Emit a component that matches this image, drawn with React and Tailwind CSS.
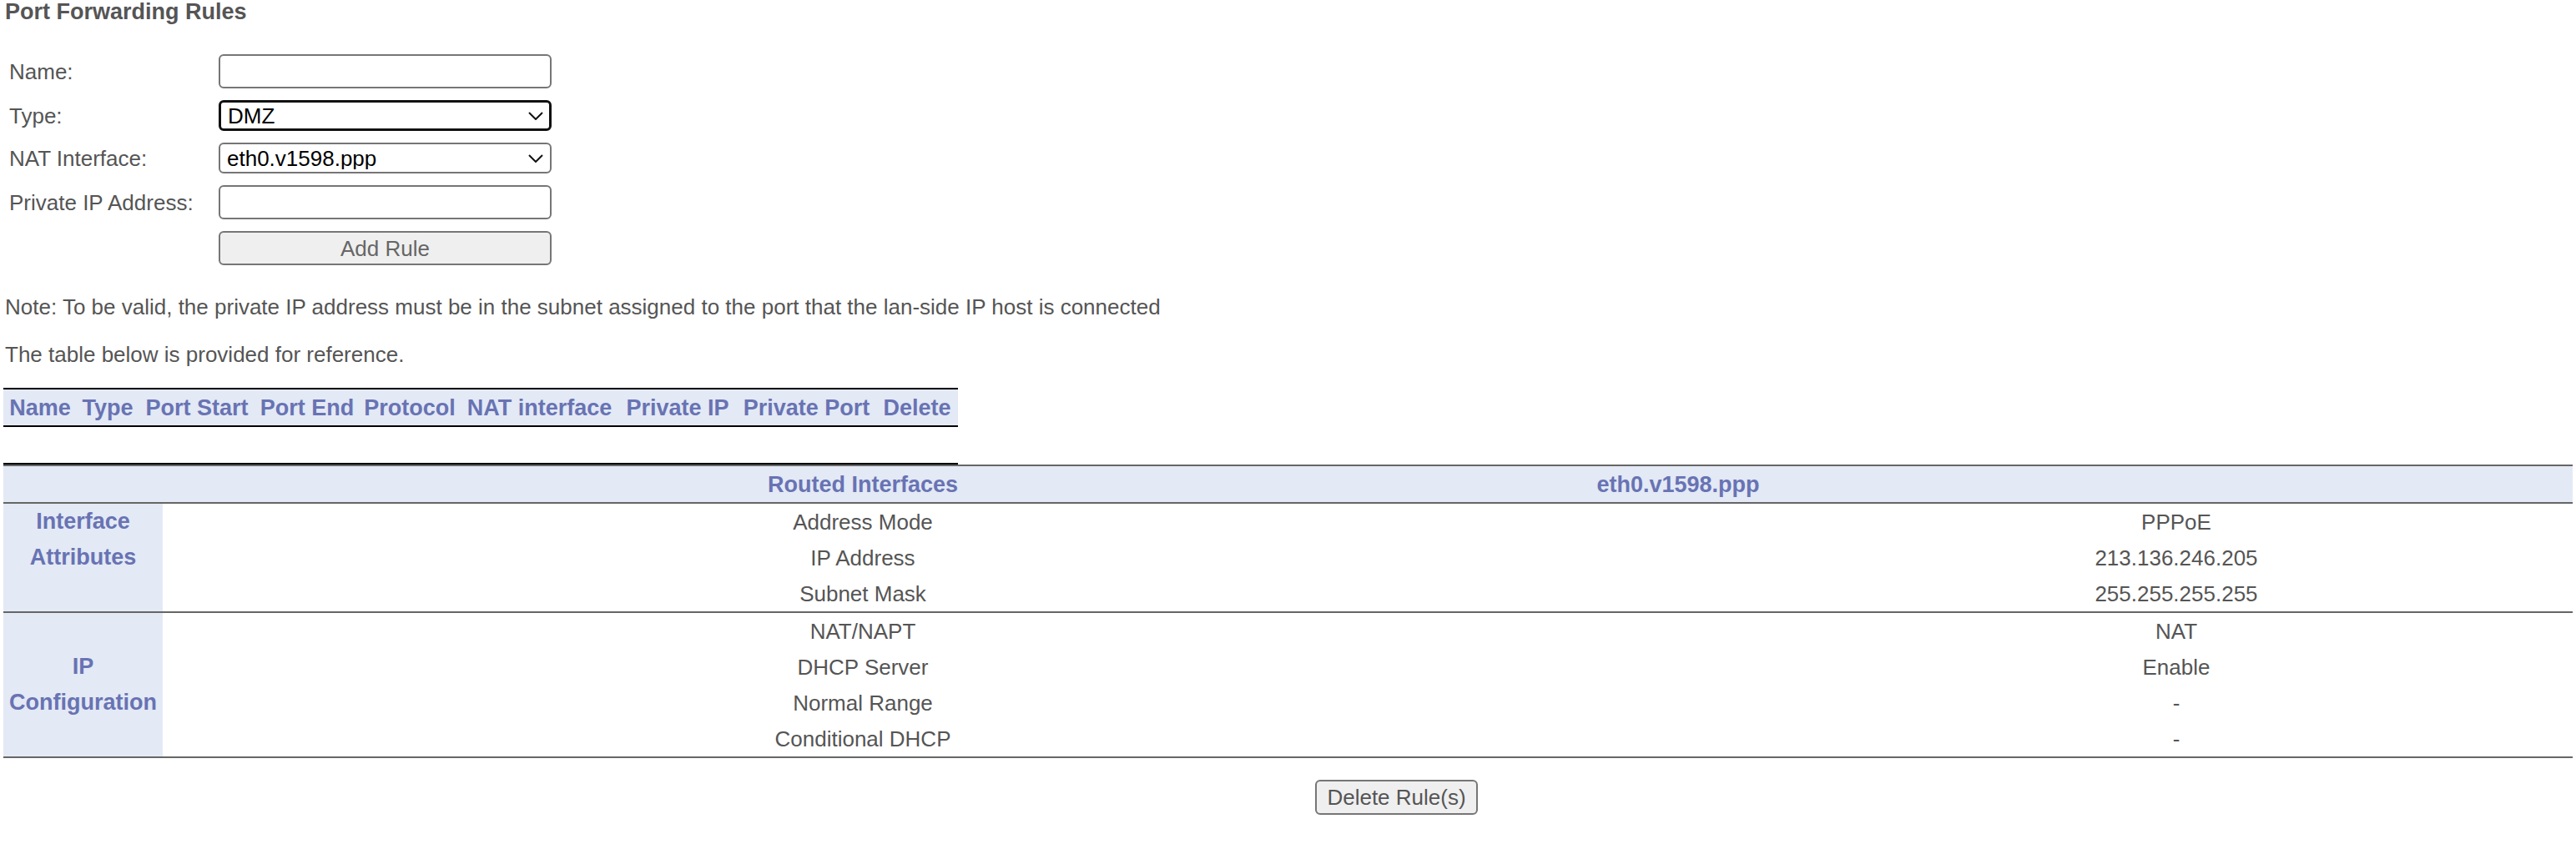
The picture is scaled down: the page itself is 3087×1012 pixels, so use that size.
import React from 'react';

const RULE_COLUMNS = [
  ['Name', 88],
  ['Type', 74],
  ['Port Start', 140],
  ['Port End', 124],
  ['Protocol', 122],
  ['NAT interface', 189],
  ['Private IP', 142],
  ['Private Port', 167],
  ['Delete', 98],
];

const Chevron = () => (
  <svg className="pointer-events-none absolute right-[10px] top-1/2 -translate-y-1/2" width="18" height="10" viewBox="0 0 18 10">
    <polyline points="1,1 9,9 17,1" fill="none" stroke="#111" strokeWidth="2" />
  </svg>
);

const FormRow = ({ label, children }) => (
  <div className="flex items-center">
    <div className="w-[251px] shrink-0">{label}</div>
    {children}
  </div>
);

const Row = ({ name, value }) => (
  <div className="grid grid-cols-[1678px_1fr] h-[43px] items-center">
    <div className="text-center">{name}</div>
    <div className="text-center pl-[260px]">{value}</div>
  </div>
);

const App = () => {
  return (
    <div className="min-h-screen bg-white text-[#555] text-[26px] leading-[30px] font-['Liberation_Sans',Arial,sans-serif]">
      {/* Title */}
      <div className="pl-[6px] h-[28px] leading-[28px] text-[27px] font-bold">Port Forwarding Rules</div>

      {/* Add rule form */}
      <div className="mt-[37px] pl-[11px] flex flex-col gap-[14px]">
        <FormRow label="Name:">
          <input readOnly className="w-[399px] h-[41px] border-2 border-[#767676] rounded-[6px] bg-white" />
        </FormRow>
        <FormRow label="Type:">
          <div className="relative">
            <select defaultValue="DMZ" className="appearance-none w-[399px] h-[37px] border-[3px] border-[#111] rounded-[6px] bg-white pl-[8px] text-[26px] leading-none text-black">
              <option>DMZ</option>
            </select>
            <Chevron />
          </div>
        </FormRow>
        <FormRow label="NAT Interface:">
          <div className="relative">
            <select defaultValue="eth0.v1598.ppp" className="appearance-none w-[399px] h-[37px] border-2 border-[#767676] rounded-[6px] bg-white pl-[8px] text-[26px] leading-none text-black">
              <option>eth0.v1598.ppp</option>
            </select>
            <Chevron />
          </div>
        </FormRow>
        <FormRow label="Private IP Address:">
          <input readOnly className="w-[399px] h-[41px] border-2 border-[#767676] rounded-[6px] bg-white" />
        </FormRow>
        <FormRow label="">
          <button className="w-[399px] h-[41px] border-2 border-[#767676] rounded-[6px] bg-[#efefef] text-[#666] text-[26px]">Add Rule</button>
        </FormRow>
      </div>

      {/* Notes */}
      <div className="mt-[35px] pl-[6px] h-[30px]">
        Note: To be valid, the private IP address must be in the subnet assigned to the port that the lan-side IP host is connected
      </div>
      <div className="mt-[27px] pl-[6px] h-[30px]">The table below is provided for reference.</div>

      {/* Rules table (empty) */}
      <div className="mt-[25px] ml-[4px] w-[1144px]">
        <div className="flex h-[47px] border-y-2 border-black bg-[#e3e9f5] items-center text-[#6873b3] font-bold text-[27px]">
          {RULE_COLUMNS.map(([title, w]) => (
            <div key={title} className="text-center whitespace-nowrap" style={{ width: w }}>{title}</div>
          ))}
        </div>
        <div className="h-[45px] border-b-2 border-black" />
      </div>

      {/* Routed interfaces */}
      <div className="mx-[4px]">
        <div className="grid grid-cols-[191px_1678px_1fr] h-[47px] border-y-2 border-[#666] bg-[#e3e9f5] items-center text-[#6873b3] font-bold text-[27px]">
          <div />
          <div className="text-center">Routed Interfaces</div>
          <div className="text-center pr-[934px]">eth0.v1598.ppp</div>
        </div>

        <div className="flex border-b-2 border-[#666]">
          <div className="w-[191px] shrink-0 bg-[#e3e9f5] flex flex-col justify-start text-center text-[#6873b3] font-bold text-[27px] leading-[43px]">
            <span>Interface</span>
            <span>Attributes</span>
          </div>
          <div className="flex-1">
            <Row name="Address Mode" value="PPPoE" />
            <Row name="IP Address" value="213.136.246.205" />
            <Row name="Subnet Mask" value="255.255.255.255" />
          </div>
        </div>

        <div className="flex border-b-2 border-[#666]">
          <div className="w-[191px] shrink-0 bg-[#e3e9f5] flex flex-col justify-center text-center text-[#6873b3] font-bold text-[27px] leading-[43px]">
            <span>IP</span>
            <span>Configuration</span>
          </div>
          <div className="flex-1">
            <Row name="NAT/NAPT" value="NAT" />
            <Row name="DHCP Server" value="Enable" />
            <Row name="Normal Range" value="-" />
            <Row name="Conditional DHCP" value="-" />
          </div>
        </div>
      </div>

      <div className="mt-[26px] pl-[1576px]">
        <button className="w-[195px] h-[42px] border-2 border-[#767676] rounded-[6px] bg-[#efefef] text-[#555] text-[26px]">Delete Rule(s)</button>
      </div>
    </div>
  );
};

export default App;
